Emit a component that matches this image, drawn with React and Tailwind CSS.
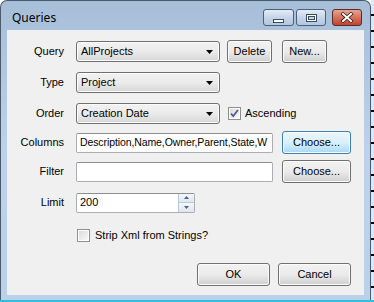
import React from "react";

const ui = { fontFamily: '"Liberation Sans", Arial, sans-serif' };

const Arrow = () => (
    <svg width="7" height="4" viewBox="0 0 7 4">
        <path d="M0 0h7L3.5 4z" fill="#000" />
    </svg>
);

const Combo = ({ value }) => (
    <div className="flex items-center justify-between w-[144px] h-[21px] rounded-[3px] border border-[#707070] bg-gradient-to-b from-[#f2f2f2] via-[#ebebeb] to-[#d6d6d6] pl-[4px] pr-[6px] shadow-[inset_0_0_0_1px_#fcfcfc]">
        <span className="text-[11px] text-black">{value}</span>
        <Arrow />
    </div>
);

const Button = ({ children, w, focus }) => (
    <div
        className={`flex items-center justify-center h-[23px] rounded-[3px] border text-[11px] text-black ${w} ${
            focus
                ? "border-[#3c7fb1] bg-gradient-to-b from-[#eaf6fd] via-[#d9f0fc] to-[#a7d9f5] shadow-[inset_0_0_0_1px_#fcfcfc]"
                : "border-[#707070] bg-gradient-to-b from-[#f2f2f2] via-[#ebebeb] to-[#cfcfcf] shadow-[inset_0_0_0_1px_#fcfcfc]"
        }`}
    >
        {children}
    </div>
);

const TextBox = ({ children, w }) => (
    <div
        className={`flex items-center h-[20px] ${w} border border-[#abadb3] border-t-[#8e8f8f] rounded-[2px] bg-white pl-[3px] text-[11px] text-black overflow-hidden whitespace-nowrap`}
    >
        {children}
    </div>
);

const Check = ({ checked }) => (
    <div className="w-[13px] h-[13px] border border-[#8e8f8f] bg-white p-[1px]">
        <div className="w-full h-full bg-gradient-to-br from-[#dcdcdc] to-[#f8f8f8] flex items-center justify-center">
            {checked && (
                <svg width="9" height="9" viewBox="0 0 9 9">
                    <path d="M1 4.5l2.2 2.5L8 1" stroke="#4a5f97" strokeWidth="1.8" fill="none" />
                </svg>
            )}
        </div>
    </div>
);

const Label = ({ children }) => (
    <div className="w-[57px] text-right text-[11px] text-black mr-[12px]">{children}</div>
);

const CaptionButton = ({ children, red, w }) => (
    <div
        className={`${w} h-[17px] rounded-[3px] border flex items-center justify-center ${
            red
                ? "border-[#5b2b24] bg-gradient-to-b from-[#e8a493] via-[#d2725d] to-[#c1432d]"
                : "border-[#4d5f78] bg-gradient-to-b from-[#e3ecf6] via-[#c5d5e8] to-[#b2c7e0]"
        }`}
    >
        {children}
    </div>
);

export default function App() {
    return (
        <div className="w-[374px] h-[302px] flex flex-col bg-white overflow-hidden" style={ui}>
            <div className="flex flex-1">
                {/* window */}
                <div className="w-[371px] h-full flex flex-col rounded-t-[7px] border border-b-0 border-[#4b5a6c] bg-gradient-to-b from-[#a7bed9] via-[#bdd2ea] to-[#bad1ea]">
                    <div className="h-[29px] flex items-start pl-[11px] pr-[8px]">
                        <span
                            className="mt-[11px] text-[12px] text-black leading-none"
                            style={{ fontFamily: '"Noto Sans", "Open Sans", sans-serif' }}
                        >
                            Queries
                        </span>
                        <div className="ml-auto mt-[8px] flex gap-[2px]">
                            <CaptionButton w="w-[31px]">
                                <div className="w-[11px] h-[4px] mt-[6px] border border-[#3a4a60] bg-white" />
                            </CaptionButton>
                            <CaptionButton w="w-[30px]">
                                <div className="w-[11px] h-[8px] border border-[#3a4a60] bg-white p-[1px]">
                                    <div className="w-full h-full border border-[#3a4a60] bg-[#c9d8ea]" />
                                </div>
                            </CaptionButton>
                            <div className="w-[2px]" />
                            <CaptionButton w="w-[30px]" red>
                                <svg width="14" height="11" viewBox="0 0 14 11">
                                    <path d="M3 2L11 9M11 2L3 9" stroke="#3d1a14" strokeWidth="3.6" strokeLinecap="square" />
                                    <path d="M3 2L11 9M11 2L3 9" stroke="#fff" strokeWidth="2" strokeLinecap="square" />
                                </svg>
                            </CaptionButton>
                        </div>
                    </div>
                    {/* client */}
                    <div className="mx-[6px] h-[265px] bg-[#f0f0f0] flex flex-col">
                        <div className="flex items-center h-[23px] mt-[10px]">
                            <Label>Query</Label>
                            <Combo value="AllProjects" />
                            <div className="ml-[7px]">
                                <Button w="w-[45px]">Delete</Button>
                            </div>
                            <div className="ml-[10px]">
                                <Button w="w-[45px]">New...</Button>
                            </div>
                        </div>
                        <div className="flex items-center h-[23px] mt-[8px]">
                            <Label>Type</Label>
                            <Combo value="Project" />
                        </div>
                        <div className="flex items-center h-[23px] mt-[8px]">
                            <Label>Order</Label>
                            <Combo value="Creation Date" />
                            <div className="ml-[8px] flex items-center gap-[4px]">
                                <Check checked />
                                <span className="text-[11px] text-black">Ascending</span>
                            </div>
                        </div>
                        <div className="flex items-center h-[23px] mt-[6px]">
                            <Label>Columns</Label>
                            <TextBox w="w-[197px]">
                                <span className="text-[10.5px] tracking-[-0.1px]">Description,Name,Owner,Parent,State,W</span>
                            </TextBox>
                            <div className="ml-[9px]">
                                <Button w="w-[69px]" focus>
                                    Choose...
                                </Button>
                            </div>
                        </div>
                        <div className="flex items-center h-[23px] mt-[6px]">
                            <Label>Filter</Label>
                            <TextBox w="w-[197px]" />
                            <div className="ml-[9px]">
                                <Button w="w-[69px]">Choose...</Button>
                            </div>
                        </div>
                        <div className="flex items-center h-[23px] mt-[8px]">
                            <Label>Limit</Label>
                            <div className="flex items-center w-[119px] h-[20px] border border-[#abadb3] border-t-[#8e8f8f] rounded-[2px] bg-white pl-[3px] text-[11px] text-black">
                                200
                                <div className="ml-auto h-full flex flex-col w-[16px] border-l border-[#b9c7d8]">
                                    <div className="flex-1 flex items-center justify-center bg-gradient-to-b from-[#f4f7fb] to-[#dfe6ef] border-b border-[#b9c7d8]">
                                        <svg width="5" height="3" viewBox="0 0 5 3">
                                            <path d="M0 3h5L2.5 0z" fill="#4d6185" />
                                        </svg>
                                    </div>
                                    <div className="flex-1 flex items-center justify-center bg-gradient-to-b from-[#f4f7fb] to-[#dfe6ef]">
                                        <svg width="5" height="3" viewBox="0 0 5 3">
                                            <path d="M0 0h5L2.5 3z" fill="#4d6185" />
                                        </svg>
                                    </div>
                                </div>
                            </div>
                        </div>
                        <div className="flex items-center h-[23px] mt-[10px] pl-[70px] gap-[5px]">
                            <Check />
                            <span className="text-[11px] text-black">Strip Xml from Strings?</span>
                        </div>
                        <div className="flex items-center justify-end h-[23px] mt-[16px] pr-[13px] gap-[8px]">
                            <Button w="w-[73px]">OK</Button>
                            <Button w="w-[73px]">Cancel</Button>
                        </div>
                    </div>
                </div>
                {/* strip of window behind */}
                <div className="w-[3px] h-full bg-[#dce8f5] bg-[repeating-linear-gradient(to_bottom,#dce8f5_0px,#dce8f5_14px,#000_14px,#000_16px)]" />
            </div>
            <div className="h-[2px] bg-[#33bedc]" />
        </div>
    );
}
